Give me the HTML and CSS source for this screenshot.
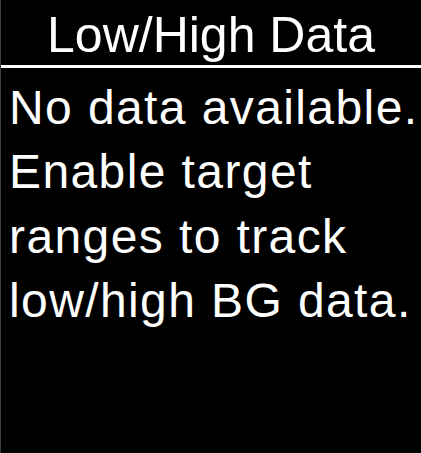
FILE: index.html
```html
<!DOCTYPE html>
<html>
<head>
<meta charset="utf-8">
<link rel="stylesheet" href="styles.css">
</head>
<body>
<div class="screen">
  <header class="title">Low/High Data</header>
  <div class="rule"></div>
  <div class="message">
    <div class="line">No data available.</div>
    <div class="line">Enable target</div>
    <div class="line">ranges to track</div>
    <div class="line">low/high BG data.</div>
  </div>
</div>
</body>
</html>
```

FILE: styles.css
```css
html, body {
  margin: 0;
  padding: 0;
  background: #000;
}

.screen {
  width: 421px;
  height: 453px;
  box-sizing: border-box;
  border-left: 1px solid #3c3c3c;
  background: #000;
  color: #fff;
  font-family: "Liberation Sans", Arial, sans-serif;
  overflow: hidden;
}

.title {
  height: 65px;
  box-sizing: border-box;
  padding-top: 6px;
  line-height: 59px;
  font-size: 50px;
  text-align: center;
  white-space: nowrap;
}

.rule {
  height: 3px;
  background: #fff;
}

.message {
  padding: 7.5px 0 0 8px;
  font-size: 48px;
  line-height: 64.5px;
  letter-spacing: 1.4px;
  white-space: nowrap;
}
```
